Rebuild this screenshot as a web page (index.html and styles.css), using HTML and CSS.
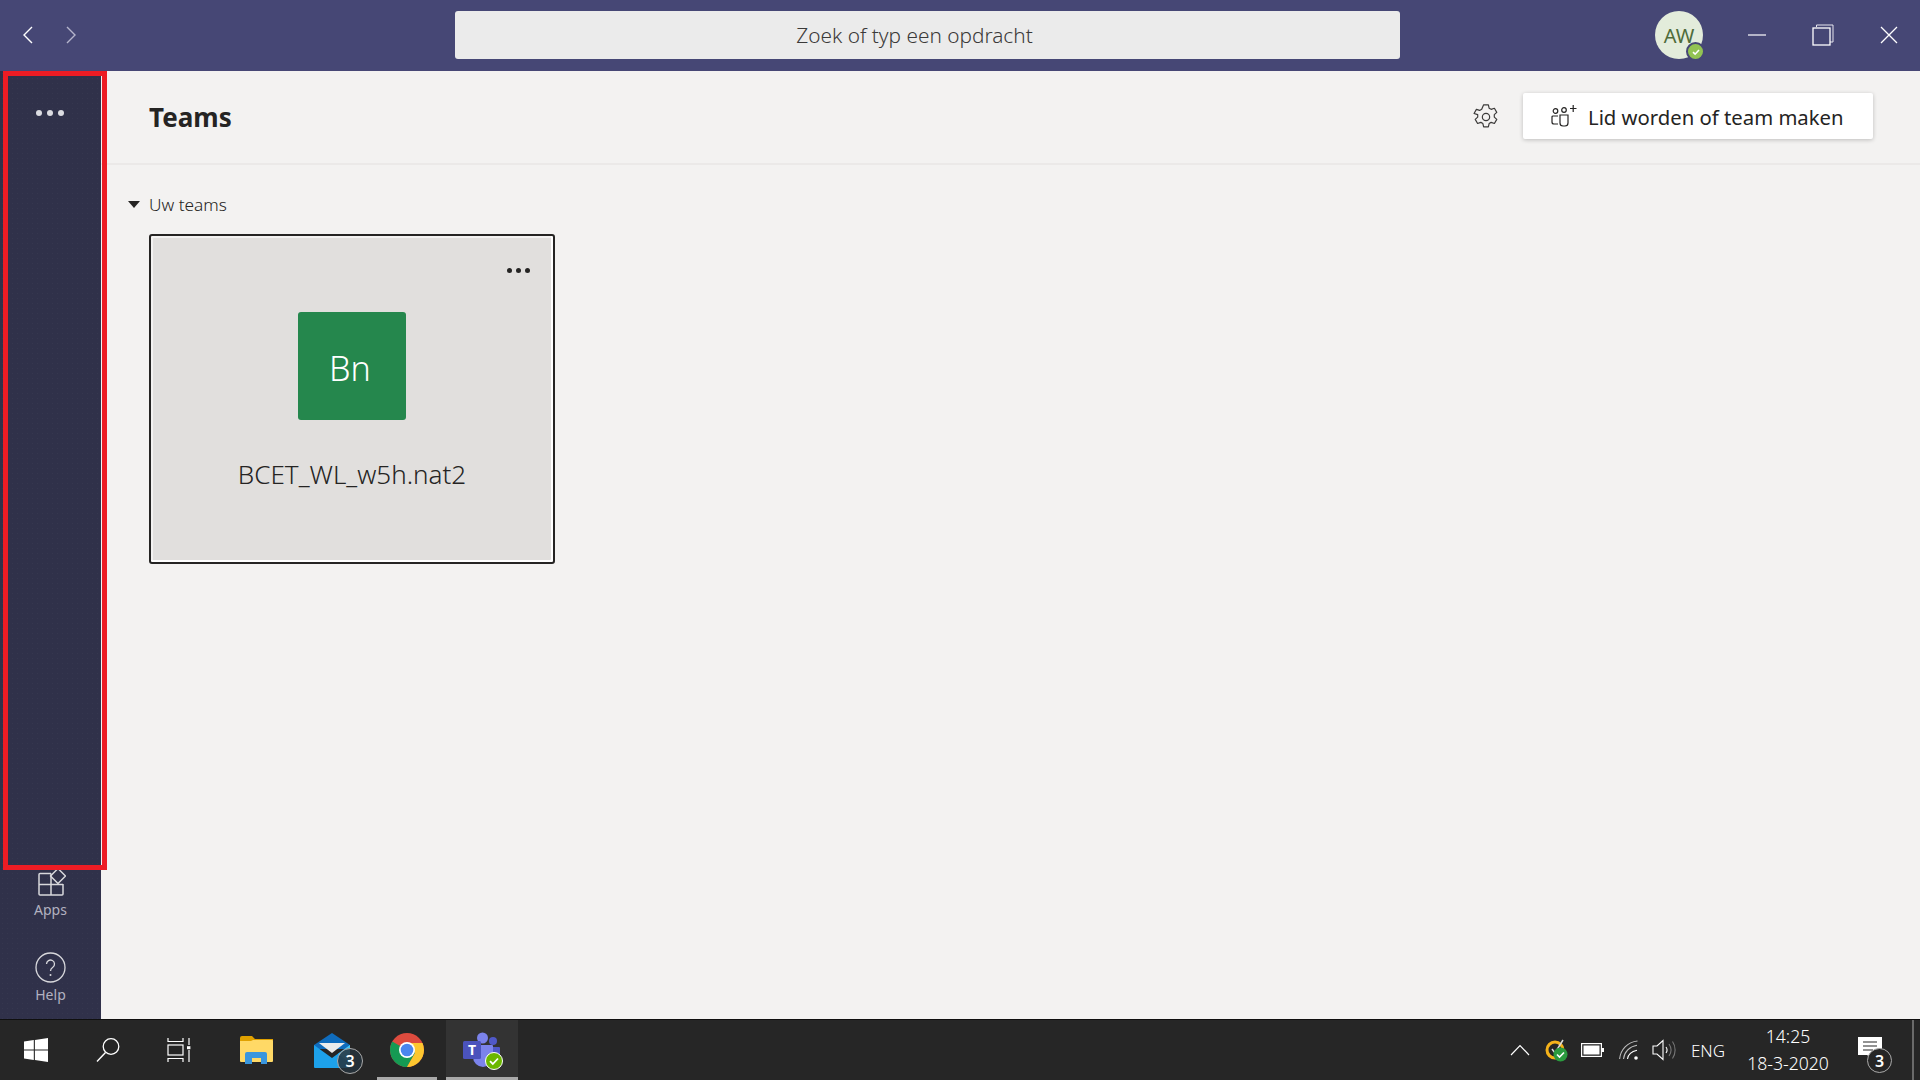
FILE: index.html
```html
<!DOCTYPE html>
<html lang="nl">
<head>
<meta charset="utf-8">
<title>Microsoft Teams</title>
<link rel="stylesheet" href="styles.css">
</head>
<body>
<div class="app">
  <header class="titlebar">
    <nav class="nav-arrows">
      <svg class="nav-arrow" width="12" height="18" viewBox="0 0 12 18"><path d="M10 1L2 9l8 8" fill="none" stroke="#fff" stroke-width="1.4"/></svg>
      <svg class="nav-arrow" width="12" height="18" viewBox="0 0 12 18"><path d="M2 1l8 8-8 8" fill="none" stroke="#b5b5cc" stroke-width="1.4"/></svg>
    </nav>
    <div class="search">Zoek of typ een opdracht</div>
    <div class="avatar">AW
      <span class="avatar-badge"><svg width="10" height="10" viewBox="0 0 10 10"><path d="M2 5.2l2.1 2L8 3" fill="none" stroke="#fff" stroke-width="1.6"/></svg></span>
    </div>
    <div class="window-controls">
      <svg width="18" height="18" viewBox="0 0 18 18"><path d="M0 9h18" stroke="#fff" stroke-width="1.2"/></svg>
      <svg width="22" height="22" viewBox="0 0 22 22"><path d="M4.5 3V1h16.500v17H18" fill="none" stroke="#e6e6ef" stroke-width="1"/><rect x="1" y="4" width="17" height="17" fill="none" stroke="#fff" stroke-width="1.300"/></svg>
      <svg width="18" height="18" viewBox="0 0 18 18"><path d="M1 1l16 16M17 1L1 17" stroke="#fff" stroke-width="1.300"/></svg>
    </div>
  </header>

  <div class="middle">
    <aside class="rail">
      <div class="rail-dots"><i></i><i></i><i></i></div>
      <div class="rail-bottom">
        <div class="rail-item rail-apps">
          <svg width="30" height="30" viewBox="0 0 30 30"><g fill="none" stroke="#d8d8dc" stroke-width="1.500"><path d="M15 6.500H4a1 1 0 0 0-1 1V27a1 1 0 0 0 1 1h22a1 1 0 0 0 1-1V17"/><path d="M3 17.500h24M15 6.500V28"/><path d="M22 1.500l7.500 7.500-7.500 7.500L14.500 9z" stroke-linejoin="round"/></g></svg>
          <span>Apps</span>
        </div>
        <div class="rail-item rail-help">
          <svg width="31" height="31" viewBox="0 0 31 31"><circle cx="15.500" cy="15.500" r="14.500" fill="none" stroke="#d8d8dc" stroke-width="1.300"/><path d="M11.500 12a4 4 0 1 1 6.300 3.300c-1.500 1-2.300 1.700-2.300 3.700" fill="none" stroke="#d8d8dc" stroke-width="1.300"/><circle cx="15.500" cy="23" r="1" fill="#d8d8dc"/></svg>
          <span>Help</span>
        </div>
      </div>
    </aside>

    <main class="main">
      <div class="main-header">
        <h1 class="main-title">Teams</h1>
        <svg class="gear" width="28" height="28" viewBox="0 0 26 26"><path d="M10.800 1.700h4.400l.7 3.100 1.900 1.100 3-1 2.200 3.800-2.300 2.100v2.300l2.300 2.100-2.200 3.800-3-1-1.900 1.100-.7 3.100h-4.400l-.7-3.100-1.900-1.100-3 1-2.200-3.800 2.300-2.100v-2.300L1.900 9.700l2.200-3.800 3 1 1.900-1.100z" fill="none" stroke="#3b3a39" stroke-width="1.100" stroke-linejoin="round"/><circle cx="13" cy="13" r="3.400" fill="none" stroke="#3b3a39" stroke-width="1.100"/></svg>
        <button class="join-btn">
          <svg width="26" height="24" viewBox="0 0 26 24"><g fill="none" stroke="#252423" stroke-width="1.200"><circle cx="4.500" cy="7" r="2.300"/><circle cx="13" cy="6" r="2.300"/><path d="M7 12H2a1 1 0 0 0-1 1v5a2 2 0 0 0 2 2h4"/><path d="M9 11h8v8a3 3 0 0 1-3 3h-2a3 3 0 0 1-3-3z"/><path d="M19 4.500h6.500M22.200 1v7"/></g></svg>
          <span class="join-label">Lid worden of team maken</span>
        </button>
      </div>
      <div class="section-label"><span class="caret"></span>Uw teams</div>
      <article class="team-card">
        <div class="card-dots"><i></i><i></i><i></i></div>
        <div class="team-tile">Bn</div>
        <div class="team-name">BCET_WL_w5h.nat2</div>
      </article>
    </main>
  </div>

  <footer class="taskbar">
    <div class="task-cell w-start">
      <svg width="24" height="24" viewBox="0 0 24 24"><path fill="#fff" d="M0 3.400l9.800-1.300v9.400H0zM10.900 1.900L24 0v11.500H10.900zM0 12.500h9.800v9.500L0 20.600zM10.900 12.500H24V24l-13.100-1.900z"/></svg>
    </div>
    <div class="task-cell w-search">
      <svg width="24" height="26" viewBox="0 0 24 26"><circle cx="15" cy="9.500" r="7.800" fill="none" stroke="#fff" stroke-width="1.300"/><path d="M9.500 15.500L1 24.500" stroke="#fff" stroke-width="1.400"/></svg>
    </div>
    <div class="task-cell w-view">
      <svg width="24" height="24" viewBox="0 0 24 24"><g fill="none" stroke="#fff" stroke-width="1.200"><path d="M1 0v3.500h15V0M1 24v-3.500h15V24"/><rect x="1" y="7" width="15" height="10"/><path d="M22 0v7M22 12v12"/></g><rect x="20" y="8.200" width="3.400" height="3" fill="#fff"/></svg>
    </div>
    <div class="task-cell w-files">
      <svg width="33" height="28" viewBox="0 0 33 28"><path d="M0 2a2 2 0 0 1 2-2h10l3 3h18v20H0z" fill="#e0a100"/><path d="M0 5h11l2-1h19a1 1 0 0 1 1 1v20a1 1 0 0 1-1 1H1a1 1 0 0 1-1-1z" fill="#ffd966"/><path d="M5 28V18a2 2 0 0 1 2-2h18a2 2 0 0 1 2 2v10h-6v-6h-9v6z" fill="#3a96dd"/></svg>
    </div>
    <div class="task-cell w-mail">
      <svg width="36" height="35" viewBox="0 0 36 35"><path d="M0 12L18 0l18 12v4H0z" fill="#0f6cbd"/><path d="M5 10h26L18 20z" fill="#ececec"/><path d="M0 12l18 13 18-13v22a1 1 0 0 1-1 1H1a1 1 0 0 1-1-1z" fill="#1da1ea"/><path d="M36 12L24 21l12 9z" fill="#45c4f5"/></svg>
      <span class="mail-badge">3</span>
    </div>
    <div class="task-cell w-chrome is-open">
      <svg width="34" height="34" viewBox="0 0 34 34"><circle cx="17" cy="17" r="17" fill="#dd4b3e"/><path d="M17 17L2.300 8.500A17 17 0 0 0 17 34l8.500-14.700z" fill="#159a53"/><path d="M17 10h15.500A17 17 0 0 1 34 17a17 17 0 0 1-17 17l8-14z" fill="#fdc72f"/><circle cx="17" cy="17" r="8" fill="#fff"/><circle cx="17" cy="17" r="6.300" fill="#4a86ee"/></svg>
    </div>
    <div class="task-cell w-teams is-open is-active">
      <svg width="38" height="36" viewBox="0 0 38 36"><circle cx="30" cy="9" r="4" fill="#5059c9"/><path d="M23 15h13a1 1 0 0 1 1 1v9a6 6 0 0 1-12 0z" fill="#5059c9"/><circle cx="19.500" cy="6" r="5.500" fill="#7b83eb"/><path d="M10 13h19a1 1 0 0 1 1 1v11a10 10 0 0 1-20 0z" fill="#7b83eb"/><rect y="9" width="18" height="18" rx="1.500" fill="#4b53bc"/><text x="9" y="23" class="teams-t">T</text></svg>
      <span class="teams-badge"><svg width="14" height="14" viewBox="0 0 14 14"><path d="M3 7.200l2.800 2.800L11 4.500" fill="none" stroke="#fff" stroke-width="1.800"/></svg></span>
    </div>

    <div class="tray">
      <div class="tray-cell c-chev"><svg width="20" height="12" viewBox="0 0 20 12"><path d="M1 11l9-9.500 9 9.500" fill="none" stroke="#fff" stroke-width="1.200"/></svg></div>
      <div class="tray-cell c-norton">
        <svg width="24" height="24" viewBox="0 0 24 24"><circle cx="10" cy="12" r="8" fill="none" stroke="#f5b21a" stroke-width="3"/><path d="M7 11l3 4 8-13" fill="none" stroke="#ddd" stroke-width="1.500"/><circle cx="15.500" cy="16.500" r="7" fill="#2b9b3f"/><path d="M12 16.500l2.500 2.500 4.500-4.500" fill="none" stroke="#fff" stroke-width="1.600"/></svg>
      </div>
      <div class="tray-cell c-batt"><svg width="23" height="14" viewBox="0 0 23 14"><rect x=".6" y=".6" width="19.800" height="12.800" fill="none" stroke="#fff" stroke-width="1.200"/><rect x="2.500" y="2.500" width="16" height="9" fill="#fff"/><rect x="21" y="5" width="2" height="4" fill="#fff"/></svg></div>
      <div class="tray-cell c-wifi"><svg width="20" height="20" viewBox="0 0 20 20"><g fill="none" stroke="#bdbdbd" stroke-width="1.100"><path d="M.6 19C1.500 9.500 8.500 2 18.500 1"/><path d="M4.500 19C5.300 12 10.500 6.500 18 5.300"/></g><path d="M8.500 19c.6-4.300 4-7.700 9.500-8.800" fill="none" stroke="#fff" stroke-width="1.100"/><circle cx="17" cy="18" r="1.800" fill="#fff"/></svg></div>
      <div class="tray-cell c-vol"><svg width="24" height="22" viewBox="0 0 24 22"><path d="M1 7h4l6-5.500v19L5 15H1z" fill="none" stroke="#fff" stroke-width="1.100"/><path d="M14 8c1.300 1.800 1.300 4.200 0 6" fill="none" stroke="#fff" stroke-width="1.100"/><path d="M17 5c2.500 3.600 2.500 8.400 0 12M20.500 2.500c3.500 5 3.500 12 0 17" fill="none" stroke="#777" stroke-width="1.100"/></svg></div>
      <div class="tray-cell c-eng">ENG</div>
      <div class="tray-cell c-clock"><span>14:25</span><span>18-3-2020</span></div>
      <div class="tray-cell c-action">
        <svg width="24" height="26" viewBox="0 0 24 26"><path d="M0 0h24v18H13l-1 0 6 7-9-7H0z" fill="#fff"/><path d="M5 5h14M5 9h14M5 13h10" stroke="#262626" stroke-width="1.200"/></svg>
        <span class="action-badge">3</span>
      </div>
      <div class="show-desktop"></div>
    </div>
  </footer>

  <div class="annotation"></div>
</div>
</body>
</html>
```
FILE: styles.css
```css
* { box-sizing: border-box; }
html, body { margin: 0; height: 100%; }
body {
  font-family: "Noto Sans", "Open Sans", sans-serif;
  color: #252423;
  background: #f3f2f1;
  overflow: hidden;
}
.app {
  position: relative;
  width: 1920px;
  height: 1080px;
  display: flex;
  flex-direction: column;
}

/* Title bar */
.titlebar {
  height: 71px;
  flex: none;
  background: #464775;
  display: flex;
  align-items: center;
  padding-bottom: 1px;
}
.nav-arrows {
  width: 455px;
  flex: none;
  display: flex;
  gap: 31px;
  padding-left: 22px;
}
.search {
  width: 945px;
  height: 48px;
  flex: none;
  background: #ebebeb;
  border-radius: 3px;
  display: flex;
  align-items: center;
  justify-content: center;
  padding-right: 26px;
  font-size: 20.800px;
  font-weight: 300;
  color: #3b3a39;
}
.avatar {
  position: relative;
  width: 48px;
  height: 48px;
  flex: none;
  margin-left: 255px;
  border-radius: 50%;
  background: #e3ecdb;
  color: #4e6b3a;
  font-size: 20px;
  display: flex;
  align-items: center;
  justify-content: center;
}
.avatar-badge {
  position: absolute;
  right: -2px;
  bottom: -2px;
  width: 15px;
  height: 15px;
  border-radius: 50%;
  background: #92c353;
  border: 2px solid #464775;
  display: flex;
  align-items: center;
  justify-content: center;
  box-sizing: content-box;
}
.window-controls {
  flex: none;
  margin-left: 45px;
  display: flex;
  align-items: center;
  gap: 46px;
}

/* Middle */
.middle {
  flex: 1;
  display: flex;
  min-height: 0;
}
.rail {
  width: 101px;
  flex: none;
  background-color: #30314a;
  background-image: radial-gradient(#36374f 0.7px, transparent 0.8px);
  background-size: 5px 5px;
  display: flex;
  flex-direction: column;
  justify-content: space-between;
  align-items: center;
}
.rail-dots {
  display: flex;
  gap: 5px;
  margin-top: 39px;
  margin-right: 1px;
}
.rail-dots i {
  width: 6px;
  height: 6px;
  border-radius: 50%;
  background: #dcdce2;
}
.rail-bottom {
  display: flex;
  flex-direction: column;
  align-items: center;
  padding-bottom: 14px;
}
.rail-item {
  display: flex;
  flex-direction: column;
  align-items: center;
  font-size: 14px;
  line-height: 20px;
  color: #b2b1c0;
}
.rail-apps { height: 84px; }
.rail-apps svg { margin-bottom: 3px; margin-top: -1px; }
.rail-help svg { margin-bottom: 2px; }

.main {
  flex: 1;
  min-width: 0;
  background: #f3f2f1;
}
.main-header {
  height: 94px;
  display: flex;
  align-items: center;
  padding: 0 47px 2px 48px;
  border-bottom: 2px solid #ebe9e8;
}
.main-title {
  margin: 2px auto 0 0;
  font-size: 26px;
  font-weight: 700;
  color: #252423;
}
.gear { margin: 2px 23px 0 0; }
.join-btn {
  width: 350px;
  height: 46px;
  background: #fff;
  border: 0;
  border-radius: 2px;
  box-shadow: 0 1px 4px rgba(0,0,0,.22);
  display: flex;
  align-items: center;
  gap: 11px;
  padding: 0 0 0 28px;
  font: inherit;
  font-size: 20.300px;
  color: #252423;
}
.join-label { position: relative; top: 1px; }
.section-label {
  display: flex;
  align-items: center;
  margin: 26px 0 17px 0;
  padding-left: 27px;
  height: 26px;
  font-size: 17.300px;
  font-weight: 300;
  color: #252423;
}
.caret {
  width: 0;
  height: 0;
  border: 6px solid transparent;
  border-top: 7px solid #252423;
  border-bottom: 0;
  margin-right: 9px;
}
.team-card {
  position: relative;
  width: 406px;
  height: 330px;
  margin-left: 48px;
  background: #e1dfdd;
  border: 2px solid #252423;
  border-radius: 3px;
  box-shadow: inset -2px -2px 0 #fff, inset 2px 2px 0 #f3f2f1;
  display: flex;
  flex-direction: column;
  align-items: center;
  padding-top: 76px;
}
.card-dots {
  position: absolute;
  top: 32px;
  right: 23px;
  display: flex;
  gap: 4px;
}
.card-dots i {
  width: 5px;
  height: 5px;
  border-radius: 50%;
  background: #252423;
}
.team-tile {
  width: 108px;
  height: 108px;
  background: #25874d;
  border-radius: 3px;
  color: #fff;
  font-size: 34px;
  font-weight: 300;
  display: flex;
  align-items: center;
  justify-content: center;
  padding: 4px 4px 0 0;
}
.team-name {
  margin-top: 36px;
  font-size: 26px;
  font-weight: 300;
  line-height: 36px;
  color: #252423;
}

/* Taskbar */
.taskbar {
  height: 61px;
  flex: none;
  background: #262626;
  border-top: 1px solid #0f0f0f;
  display: flex;
  align-items: stretch;
}
.task-cell {
  position: relative;
  flex: none;
  display: flex;
  align-items: center;
  justify-content: center;
}
.w-start { width: 72px; }
.w-search { width: 72px; }
.w-view { width: 70px; }
.w-files { width: 84px; }
.w-mail { width: 68px; }
.w-chrome { width: 60px; margin-left: 11px; }
.w-teams { width: 72px; margin-left: 9px; }
.is-open::after {
  content: "";
  position: absolute;
  left: 0;
  right: 0;
  bottom: 0;
  height: 3px;
  background: #a9a9a9;
}
.is-active { background: #333; }
.mail-badge {
  position: absolute;
  left: 39px;
  top: 28px;
  width: 26px;
  height: 26px;
  border-radius: 50%;
  background: rgba(38,50,60,.85);
  border: 1px solid #aaa;
  color: #fff;
  font-size: 16px;
  font-weight: 600;
  display: flex;
  align-items: center;
  justify-content: center;
}
.teams-t {
  font-family: "Noto Sans", sans-serif;
  font-size: 14px;
  font-weight: 700;
  fill: #fff;
  text-anchor: middle;
}
.teams-badge {
  position: absolute;
  left: 39px;
  top: 32px;
  width: 18px;
  height: 18px;
  border-radius: 50%;
  background: #6bb700;
  border: 1px solid #fff;
  display: flex;
  align-items: center;
  justify-content: center;
}
.tray {
  margin-left: auto;
  display: flex;
  align-items: stretch;
  color: #fff;
}
.tray-cell {
  flex: none;
  display: flex;
  align-items: center;
  justify-content: center;
}
.c-chev { width: 40px; }
.c-norton { width: 34px; }
.c-batt { width: 36px; }
.c-wifi { width: 38px; }
.c-vol { width: 31px; }
.c-eng { width: 58px; font-size: 17px; font-weight: 300; color: #fff; }
.c-clock {
  width: 102px;
  flex-direction: column;
  font-size: 17.600px;
  font-weight: 300;
  line-height: 27px;
  color: #fff;
}
.c-action { width: 61px; position: relative; }
.action-badge {
  position: absolute;
  left: 28px;
  top: 28px;
  width: 25px;
  height: 25px;
  border-radius: 50%;
  background: #262626;
  border: 1px solid #aaa;
  color: #fff;
  font-size: 16px;
  font-weight: 600;
  display: flex;
  align-items: center;
  justify-content: center;
}
.show-desktop {
  width: 20px;
  padding-left: 12px;
  position: relative;
}
.show-desktop::after {
  content: "";
  display: block;
  width: 2px;
  height: 100%;
  background: #6a6a6a;
}

/* Red highlight drawn over the screenshot */
.annotation {
  position: absolute;
  left: 3px;
  top: 71px;
  width: 104px;
  height: 799px;
  border: 5px solid #ed1c24;
  pointer-events: none;
}
```
